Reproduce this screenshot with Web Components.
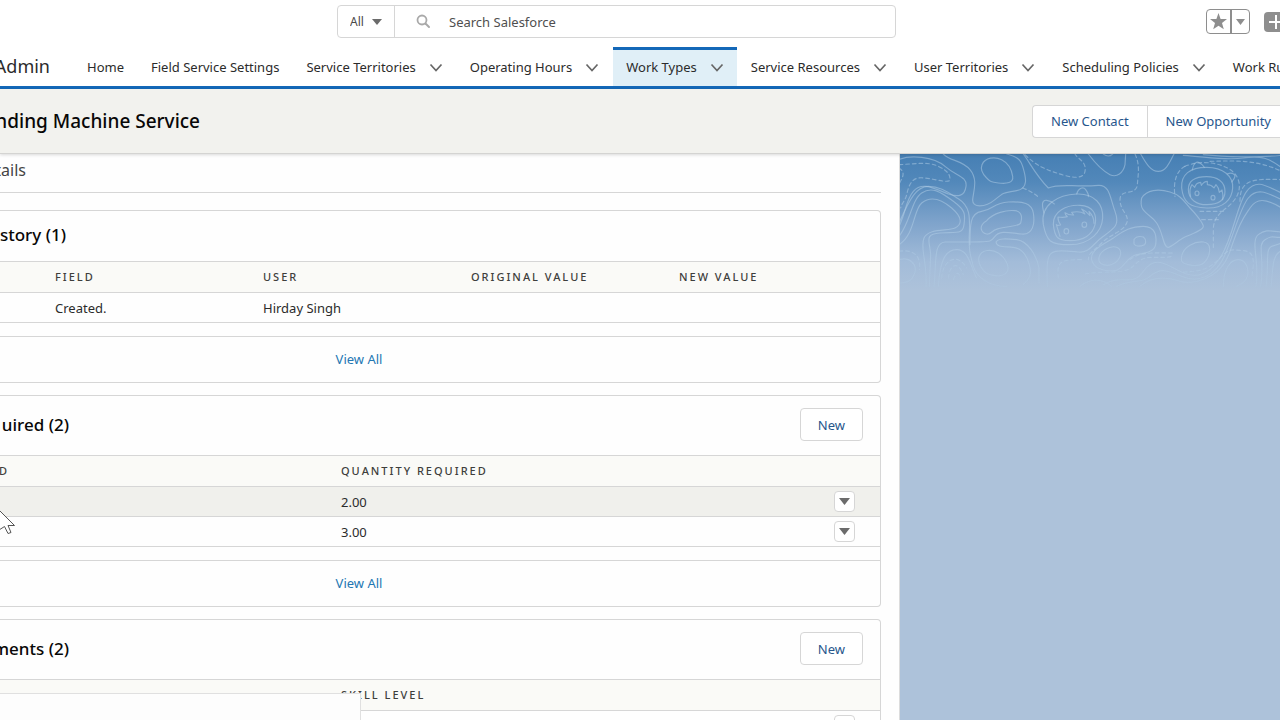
<!DOCTYPE html>
<html lang="en">
<head>
<meta charset="utf-8">
<meta name="viewport" content="width=device-width, initial-scale=1">
<title>Vending Machine Service | Salesforce</title>
<style>
    html, body {
        margin: 0;
        height: 100%;
        overflow: hidden;
    }

    body {
        --brand: #1468b8;
        --link: #2477b3;
        --button-text: #27568c;
        --border: #d6d6d6;
        --icon: #6b6b6b;
        --shade: #f2f2ee;
        font-family: 'Noto Sans', 'Open Sans', sans-serif;
        font-size: 13px;
        line-height: 20px;
        color: #2b2b2b;
        background: #fff;
    }
</style>
</head>
<body>
<app-shell>
    <global-header slot="header"></global-header>
    <app-nav slot="header" app-name="Admin">
        <nav-item>Home</nav-item>
        <nav-item>Field Service Settings</nav-item>
        <nav-item menu>Service Territories</nav-item>
        <nav-item menu>Operating Hours</nav-item>
        <nav-item menu active>Work Types</nav-item>
        <nav-item menu>Service Resources</nav-item>
        <nav-item menu>User Territories</nav-item>
        <nav-item menu>Scheduling Policies</nav-item>
        <nav-item>Work Ru</nav-item>
    </app-nav>
    <record-header slot="header" heading="nding Machine Service">
        <action-button grouped>New Contact</action-button>
        <action-button grouped>New Opportunity</action-button>
    </record-header>

    <record-tab>tails</record-tab>
    <related-list heading="story (1)" layout="history"></related-list>
    <related-list heading="uired (2)" layout="skills" creatable></related-list>
    <related-list heading="ments (2)" layout="levels" creatable></related-list>

    <topo-backdrop slot="aside"></topo-backdrop>
</app-shell>

<script>
    // Text that runs off the left edge of the panned page is anchored by its right end
    const CUT = `
        .cut {
            display: flex;
            justify-content: flex-end;
            overflow: hidden;
            white-space: nowrap;
        }
    `;

    class BaseElement extends HTMLElement {
        connectedCallback() {
            if (!this.shadowRoot) {
                this.attachShadow({ mode: 'open' });
            }
            this.shadowRoot.innerHTML = `<style>:host, *, *::before, *::after { box-sizing: border-box; }</style>${this.render()}`;
        }
    }

    class AppShell extends BaseElement {
        render() {
            return `
                <style>
                    :host {
                        display: flex;
                        flex-direction: column;
                        height: 100%;
                        overflow: hidden;
                    }
                    header {
                        position: relative;
                        z-index: 1;
                        flex: none;
                    }
                    .page {
                        flex: 1;
                        min-height: 0;
                        display: grid;
                        grid-template-columns: 900fr 380fr;
                    }
                    main {
                        display: flex;
                        flex-direction: column;
                        gap: 12px;
                        min-width: 0;
                        padding-right: 18px;
                        overflow: hidden;
                        background: #fefefe;
                        border-right: 1px solid #dcdcdc;
                    }
                    aside {
                        min-width: 0;
                        overflow: hidden;
                    }
                    .status {
                        position: absolute;
                        left: 0;
                        bottom: 0;
                        width: 361px;
                        height: 27px;
                        background: #fdfdfd;
                        border: 1px solid #e0e0e0;
                        border-width: 1px 1px 0 0;
                    }
                    .pointer {
                        position: absolute;
                        left: 0;
                        top: 508px;
                    }
                </style>
                <header><slot name="header"></slot></header>
                <div class="page">
                    <main><slot></slot></main>
                    <aside><slot name="aside"></slot></aside>
                </div>
                <div class="status" aria-hidden="true"></div>
                <svg class="pointer" width="16" height="28" viewBox="0 0 16 28" aria-hidden="true">
                    <path d="M-4 -1L14.500 17.500H8L11 24.500L8 25.500L4.500 18.500L-1 22Z" fill="#fff" stroke="#555" stroke-width="1"/>
                </svg>
            `;
        }
    }

    class GlobalHeader extends BaseElement {
        render() {
            return `
                <style>
                    :host {
                        display: grid;
                        grid-template-columns: 337fr 559fr 384fr;
                        align-items: center;
                        height: 47px;
                        padding-bottom: 4px;
                        background: #fff;
                    }
                    form {
                        grid-column: 2;
                        display: flex;
                        height: 33px;
                        border: 1px solid var(--border);
                        border-radius: 4px;
                    }
                    .scope {
                        position: relative;
                        display: flex;
                        align-items: center;
                        width: 57px;
                        border-right: 1px solid var(--border);
                    }
                    select {
                        appearance: none;
                        width: 100%;
                        height: 100%;
                        padding: 0 12px;
                        border: 0;
                        background: none;
                        font: inherit;
                        font-size: 12px;
                        color: #4a4a4a;
                    }
                    .scope svg {
                        position: absolute;
                        right: 12px;
                        pointer-events: none;
                    }
                    .query {
                        flex: 1;
                        display: flex;
                        align-items: center;
                        gap: 18px;
                        padding-left: 21px;
                    }
                    input {
                        flex: 1;
                        min-width: 0;
                        padding: 0;
                        border: 0;
                        outline: 0;
                        background: none;
                        font: inherit;
                        color: #4a4a4a;
                    }
                    input::placeholder {
                        color: #4f4f4f;
                        opacity: 1;
                    }
                    .tools {
                        grid-column: 3;
                        justify-self: end;
                        display: flex;
                        align-items: center;
                        gap: 14px;
                        width: 74px;
                        overflow: hidden;
                    }
                    .favorites {
                        flex: none;
                        display: flex;
                        width: 44px;
                        height: 25px;
                        border: 1px solid #8e8e8e;
                        border-radius: 4px;
                    }
                    button {
                        display: flex;
                        align-items: center;
                        justify-content: center;
                        padding: 0;
                        border: 0;
                        background: none;
                    }
                    .favorites button {
                        flex: 1;
                    }
                    .favorites button:first-child {
                        flex: 0 0 25px;
                        border-right: 2px solid #8e8e8e;
                    }
                    .add {
                        flex: none;
                        width: 24px;
                        height: 20px;
                        border-radius: 4px;
                        background: #8e8e8e;
                    }
                </style>
                <form role="search">
                    <div class="scope">
                        <select aria-label="Search scope"><option>All</option></select>
                        <svg width="10" height="6" viewBox="0 0 10 6" aria-hidden="true"><path d="M0 0H10L5 6Z" fill="#6b6b6b"/></svg>
                    </div>
                    <div class="query">
                        <svg width="15" height="15" viewBox="0 0 15 15" fill="none" stroke="#a9a9a9" aria-hidden="true">
                            <circle cx="6" cy="6" r="4.500" stroke-width="1.800"/>
                            <path d="M9.500 9.500L13 13" stroke-width="2" stroke-linecap="round"/>
                        </svg>
                        <input type="text" aria-label="Search Salesforce" placeholder="Search Salesforce">
                    </div>
                </form>
                <div class="tools">
                    <div class="favorites">
                        <button type="button" aria-label="Favorite">
                            <svg width="17" height="17" viewBox="0 0 17 17"><path d="M8.500 0L10.600 5.900L17 6.100L12 10L13.800 16.300L8.500 12.700L3.200 16.300L5 10L0 6.100L6.400 5.900Z" fill="#8e8e8e"/></svg>
                        </button>
                        <button type="button" aria-label="Favorites list">
                            <svg width="9" height="6" viewBox="0 0 9 6"><path d="M0 0H9L4.500 6Z" fill="#8e8e8e"/></svg>
                        </button>
                    </div>
                    <button class="add" type="button" aria-label="Global actions">
                        <svg width="14" height="14" viewBox="0 0 14 14"><path d="M7 0V14M0 7H14" stroke="#fff" stroke-width="2"/></svg>
                    </button>
                </div>
            `;
        }
    }

    class AppNav extends BaseElement {
        render() {
            return `
                <style>
                    ${CUT}
                    :host {
                        display: flex;
                        height: 42px;
                        border-bottom: 3px solid var(--brand);
                        background: #fff;
                    }
                    .cut {
                        flex: none;
                        width: 50px;
                        margin-right: 24px;
                        font-size: 18px;
                        line-height: 38px;
                    }
                    nav {
                        flex: 1;
                        min-width: 0;
                        display: flex;
                        gap: 1px;
                    }
                </style>
                <div class="cut">${this.getAttribute('app-name')}</div>
                <nav><slot></slot></nav>
            `;
        }
    }

    class NavItem extends BaseElement {
        render() {
            const chevron = `
                <button type="button" aria-label="Open list">
                    <svg width="14" height="9" viewBox="0 0 14 9"><path d="M1.500 1.500L7 7.500L12.500 1.500" fill="none" stroke="#666" stroke-width="1.700"/></svg>
                </button>
            `;
            return `
                <style>
                    :host {
                        flex: none;
                        display: flex;
                        align-items: center;
                        gap: 13px;
                        padding: 0 13px;
                        white-space: nowrap;
                    }
                    :host([active]) {
                        background: #e0eff7;
                        box-shadow: inset 0 3px var(--brand);
                    }
                    a {
                        color: inherit;
                        text-decoration: none;
                    }
                    button {
                        display: flex;
                        padding: 2px 0 0;
                        border: 0;
                        background: none;
                    }
                </style>
                <a href="#"><slot></slot></a>
                ${this.hasAttribute('menu') ? chevron : ''}
            `;
        }
    }

    class RecordHeader extends BaseElement {
        render() {
            return `
                <style>
                    ${CUT}
                    :host {
                        display: flex;
                        align-items: center;
                        justify-content: space-between;
                        height: 65px;
                        background: var(--shade);
                        border-bottom: 1px solid #d4d4d2;
                        box-shadow: 0 1px 3px rgba(0, 0, 0, 0.15);
                    }
                    h1 {
                        width: 200px;
                        margin: 0;
                        font-size: 19px;
                        font-weight: 500;
                        line-height: 28px;
                        color: #080707;
                    }
                    .actions {
                        display: flex;
                        width: 248px;
                        overflow: hidden;
                    }
                </style>
                <h1 class="cut">${this.getAttribute('heading')}</h1>
                <div class="actions"><slot></slot></div>
            `;
        }
    }

    class ActionButton extends BaseElement {
        render() {
            return `
                <style>
                    :host {
                        flex: none;
                        display: block;
                    }
                    button {
                        display: block;
                        height: 33px;
                        padding: 0 17px;
                        border: 1px solid var(--border);
                        border-radius: 4px;
                        background: #fff;
                        font: inherit;
                        color: var(--button-text);
                        white-space: nowrap;
                    }
                    :host([grouped]) button {
                        padding: 0 18px;
                        border-radius: 0;
                    }
                    :host([grouped]:first-child) button {
                        border-right: 0;
                        border-radius: 4px 0 0 4px;
                    }
                </style>
                <button type="button"><slot></slot></button>
            `;
        }
    }

    class RecordTab extends BaseElement {
        render() {
            return `
                <style>
                    ${CUT}
                    :host {
                        flex: none;
                        display: block;
                        height: 39px;
                        margin-bottom: 5px;
                        border-bottom: 1px solid var(--border);
                    }
                    a {
                        width: 26px;
                        font-size: 16px;
                        line-height: 32px;
                        color: #444;
                        text-decoration: none;
                    }
                </style>
                <a class="cut" href="#"><slot></slot></a>
            `;
        }
    }

    const LAYOUTS = {
        history: {
            columns: ['', 'Field', 'User', 'Original Value', 'New Value'],
            rows: [['', 'Created.', 'Hirday Singh', '', '']],
        },
        skills: {
            columns: ['d', 'Quantity Required'],
            rows: [['', '2.00'], ['', '3.00']],
            rowMenu: true,
            hovered: 0,
        },
        levels: {
            columns: ['', 'Skill Level'],
            rows: [['', '']],
            rowMenu: true,
        },
    };

    class RelatedList extends BaseElement {
        render() {
            const layout = LAYOUTS[this.getAttribute('layout')];
            const wide = layout.columns.length > 2;
            return `
                <style>
                    ${CUT}
                    :host {
                        flex: none;
                        display: block;
                        border: 1px solid var(--border);
                        border-left: 0;
                        border-radius: 0 4px 4px 0;
                    }
                    .top {
                        display: flex;
                        align-items: center;
                        justify-content: space-between;
                        height: 50px;
                        padding: 0 17px 2px 0;
                    }
                    :host([creatable]) .top {
                        height: 59px;
                    }
                    h2 {
                        width: 69px;
                        margin: 0;
                        font-size: 17px;
                        font-weight: 500;
                        line-height: 24px;
                        color: #080707;
                    }
                    .wide h2 {
                        width: 66px;
                    }
                    table {
                        width: 100%;
                        table-layout: fixed;
                        border-collapse: collapse;
                    }
                    th, td {
                        height: 31px;
                        padding: 0 13px;
                        border-top: 1px solid var(--border);
                        text-align: left;
                        white-space: nowrap;
                    }
                    td {
                        height: 30px;
                    }
                    tbody tr:last-child {
                        border-bottom: 1px solid var(--border);
                    }
                    th {
                        background: #fafaf7;
                        font-size: 11px;
                        font-weight: 500;
                        letter-spacing: 2px;
                        text-transform: uppercase;
                        color: #3e3e3c;
                    }
                    th:first-child {
                        width: 328px;
                        padding: 0;
                    }
                    th .cut {
                        width: 9px;
                    }
                    .wide th {
                        width: 208px;
                    }
                    .wide th:first-child {
                        width: 42px;
                    }
                    .wide th:last-child {
                        width: auto;
                    }
                    tr.hovered td {
                        background: #f0f0ec;
                    }
                    td:last-child {
                        padding-right: 25px;
                    }
                    .menu {
                        display: flex;
                        align-items: center;
                        justify-content: center;
                        width: 21px;
                        height: 21px;
                        margin-left: auto;
                        padding: 0;
                        border: 1px solid var(--border);
                        border-radius: 4px;
                        background: #fff;
                    }
                    footer {
                        height: 46px;
                        margin-top: 13px;
                        padding-right: 162px;
                        border-top: 1px solid var(--border);
                        text-align: center;
                        line-height: 44px;
                    }
                    footer a {
                        color: var(--link);
                        text-decoration: none;
                    }
                </style>
                <section class="${wide ? 'wide' : ''}">
                    <div class="top">
                        <h2 class="cut">${this.getAttribute('heading')}</h2>
                        ${this.hasAttribute('creatable') ? '<action-button>New</action-button>' : ''}
                    </div>
                    <table>
                        <thead>
                            <tr>
                                ${layout.columns.map((name, i) => `<th scope="col">${i === 0 && name ? `<div class="cut">${name}</div>` : name}</th>`).join('')}
                                ${layout.rowMenu ? '<th scope="col"></th>' : ''}
                            </tr>
                        </thead>
                        <tbody>
                            ${layout.rows.map((row, i) => `
                                <tr class="${i === layout.hovered ? 'hovered' : ''}">
                                    ${row.map(cell => `<td>${cell}</td>`).join('')}
                                    ${layout.rowMenu ? `<td>${this.renderMenu()}</td>` : ''}
                                </tr>
                            `).join('')}
                        </tbody>
                    </table>
                    <footer><a href="#">View All</a></footer>
                </section>
            `;
        }

        renderMenu() {
            return `
                <button class="menu" type="button" aria-label="Show actions">
                    <svg width="11" height="7" viewBox="0 0 11 7"><path d="M0 0H11L5.500 7Z" fill="#6b6b6b"/></svg>
                </button>
            `;
        }
    }

    class TopoBackdrop extends BaseElement {
        render() {
            return `
                <style>
                    :host {
                        display: block;
                        height: 100%;
                        background: #adc2da linear-gradient(#467fb4 0, #5288ba 28px, #7ea3cb 68px, #a3bcd9 108px, #adc2da 136px) no-repeat;
                    }
                    svg {
                        display: block;
                    }
                </style>
                <svg width="381" height="136" viewBox="30 28 1143 408" aria-hidden="true">
                    <defs>
                        <linearGradient id="fade" gradientUnits="userSpaceOnUse" x1="0" y1="300" x2="0" y2="436">
                            <stop offset="0" stop-color="#fff"/>
                            <stop offset="1" stop-color="#fff" stop-opacity="0.4"/>
                        </linearGradient>
                        <mask id="mask" maskUnits="userSpaceOnUse" x="0" y="0" width="1200" height="460">
                            <rect width="1200" height="460" fill="url(#fade)"/>
                        </mask>
                    </defs>
                    <g fill="none" stroke="#b4cfe8" stroke-opacity="0.5" stroke-width="3.500" stroke-linecap="round" stroke-linejoin="round" mask="url(#mask)">
                        <!-- ridges on the left -->
                        <path d="M27 45C60 30 130 35 165 65S232 95 228 125S205 158 175 148C130 130 95 110 70 140S50 200 27 245"/>
                        <path d="M160 28C180 50 215 45 240 75S250 140 248 165S285 190 315 165S340 145 380 138S405 90 398 65S375 35 350 28"/>
                        <path d="M27 275C60 235 65 165 95 145S150 140 190 170S225 210 222 240S200 262 150 265S120 290 122 330L118 425"/>
                        <path d="M27 300C75 270 70 195 95 175S150 160 185 190S215 240 195 250S115 250 102 280S112 350 108 425"/>
                        <path d="M27 235C60 160 80 125 115 125S170 140 205 162S240 215 238 265S240 330 250 365S300 425 350 425"/>
                        <path d="M132 425C140 350 130 295 165 292H240C300 290 300 295 315 275S360 265 395 268S435 235 430 205S400 170 355 172S310 195 275 200S240 240 240 300"/>
                        <path d="M145 425C150 350 165 315 200 315S240 360 260 400"/>
                        <path d="M290 228C310 205 350 195 375 198S395 225 392 235S350 245 325 252S305 270 290 268S262 245 290 228Z"/>
                        <path d="M318 292C325 280 350 282 380 285S440 330 447 370V415M318 292C320 310 345 305 370 308S410 330 418 360S420 400 400 420"/>
                        <path d="M268 335C275 315 305 312 325 325S360 365 352 380S320 395 300 390S260 355 268 335Z"/>
                        <path d="M276 60C285 38 315 35 335 45S365 75 368 95S350 118 325 115S300 110 290 100S270 75 276 60Z"/>
                        <path d="M27 345C60 335 82 360 74 385S50 415 27 415"/>
                        <!-- middle valleys -->
                        <path d="M400 28C420 55 440 95 475 130C510 115 550 128 625 122C660 120 660 160 675 200S675 250 640 275S600 325 565 322S500 315 485 325S470 370 472 425"/>
                        <path d="M595 28C615 55 640 80 660 90S700 85 705 60L707 28M640 28Q655 40 668 28M752 28C765 50 780 80 805 80S840 50 852 28"/>
                        <path d="M605 345C600 315 640 300 670 280S720 245 760 245S800 280 797 300S770 325 740 330S700 375 675 378S610 375 605 345Z"/>
                        <path d="M628 335C635 315 665 302 680 308S695 330 685 345S655 365 640 360S625 345 628 335Z"/>
                        <path d="M732 285Q740 272 760 277Q772 287 764 300Q740 310 732 298Z"/>
                        <path d="M755 160C770 135 805 132 840 142S885 175 900 190S940 235 940 245S915 265 890 275S850 305 835 308S820 265 800 235S745 205 755 160Z"/>
                        <path d="M875 335C880 305 915 290 940 292S962 325 950 345S915 365 895 360S872 350 875 335Z"/>
                        <!-- ridges on the right -->
                        <path d="M640 420C700 385 725 430 760 380S830 360 870 380S950 400 990 340S1040 180 1070 140S1130 125 1175 145"/>
                        <path d="M680 425C730 400 750 420 780 395S830 375 875 395S975 400 1005 330S1050 190 1075 160S1125 140 1175 165"/>
                        <path d="M750 425C790 390 840 400 870 410S990 410 1020 320S1060 220 1080 190S1125 160 1175 190"/>
                        <path d="M880 32C960 38 1010 48 1060 40S1140 40 1175 70M940 30C1010 38 1110 38 1175 32"/>
                        <path d="M1098 425C1110 350 1080 290 1105 270S1150 262 1175 262M1112 425C1125 340 1100 300 1125 285S1150 280 1175 278M1128 425C1138 350 1125 315 1145 305L1175 295M1143 425C1150 370 1145 330 1175 318"/>
                        <path d="M1000 425C1000 375 1020 345 1045 345S1080 380 1070 400S1045 420 1040 425M570 425C610 395 640 405 665 425"/>
                        <!-- dashed contours -->
                        <g stroke-dasharray="11 9">
                            <path d="M27 60C75 58 115 50 145 65S180 90 180 105S110 95 85 100S55 130 50 150S35 175 32 190M27 70C50 85 35 100 27 120"/>
                            <path d="M405 30C440 65 470 75 500 85S580 110 585 80S565 45 555 28M398 130Q425 140 445 157"/>
                            <path d="M735 28C750 60 745 85 742 120S690 130 690 165S720 210 710 235S660 270 635 295S595 325 595 345"/>
                            <path d="M885 65C945 40 1020 60 1040 95S1040 165 1015 185S970 220 970 255V315"/>
                            <path d="M930 200H1000M935 225H985M885 65C855 80 850 120 855 155M1050 170C1050 110 1080 100 1175 105M960 50C1040 48 1100 45 1175 80"/>
                            <path d="M505 400C500 350 510 345 575 345M585 388C650 375 700 395 735 360S785 345 850 335M720 345C750 320 800 325 850 325"/>
                            <path d="M880 382C940 380 960 370 990 340S1020 315 1060 318S1090 360 1085 400"/>
                            <path d="M27 320C75 312 95 340 88 375M155 400C160 340 205 325 230 370M175 400C180 355 205 350 220 390M190 405Q203 370 212 400"/>
                        </g>
                        <!-- mascot faces -->
                        <g>
                            <path d="M460 240C450 180 505 150 560 148S640 180 638 220S600 300 540 300S470 290 460 240Z"/>
                            <path d="M490 240C488 200 530 180 570 182S622 210 615 240S580 288 540 288S494 275 490 240Z"/>
                            <path d="M462 205C455 180 455 165 470 167S487 172 493 178M560 148C565 130 580 125 587 135S597 150 595 156"/>
                            <path d="M510 275L499 240Q502 244 512 241Q503 228 504 217Q520 220 532 216Q525 210 525 204Q537 212 551 211L545 203Q570 198 585 208L575 193Q590 200 600 213L597 200Q612 215 612 236"/>
                            <ellipse cx="529" cy="260" rx="7" ry="8"/>
                            <ellipse cx="583" cy="240" rx="7" ry="8"/>
                        </g>
                        <g>
                            <path d="M875 130C872 90 900 68 950 68S1030 95 1028 130S1000 192 950 190S880 175 875 130Z"/>
                            <path d="M895 135C895 105 920 96 950 96S1005 110 1005 140S980 180 950 180S896 165 895 135Z"/>
                            <path d="M907 75C910 55 920 50 928 54S940 62 943 68M1012 88C1025 82 1038 88 1034 98S1028 105 1026 112"/>
                            <path d="M902 155Q896 135 906 120L914 128Q918 114 932 113L934 122Q942 110 952 110L952 120Q964 120 972 130L978 120Q986 128 988 143L996 136Q1000 150 998 165"/>
                            <ellipse cx="921" cy="146" rx="6" ry="7"/>
                            <ellipse cx="969" cy="159" rx="6" ry="7"/>
                        </g>
                    </g>
                </svg>
            `;
        }
    }

    customElements.define('app-shell', AppShell);
    customElements.define('global-header', GlobalHeader);
    customElements.define('app-nav', AppNav);
    customElements.define('nav-item', NavItem);
    customElements.define('record-header', RecordHeader);
    customElements.define('action-button', ActionButton);
    customElements.define('record-tab', RecordTab);
    customElements.define('related-list', RelatedList);
    customElements.define('topo-backdrop', TopoBackdrop);
</script>
</body>
</html>
